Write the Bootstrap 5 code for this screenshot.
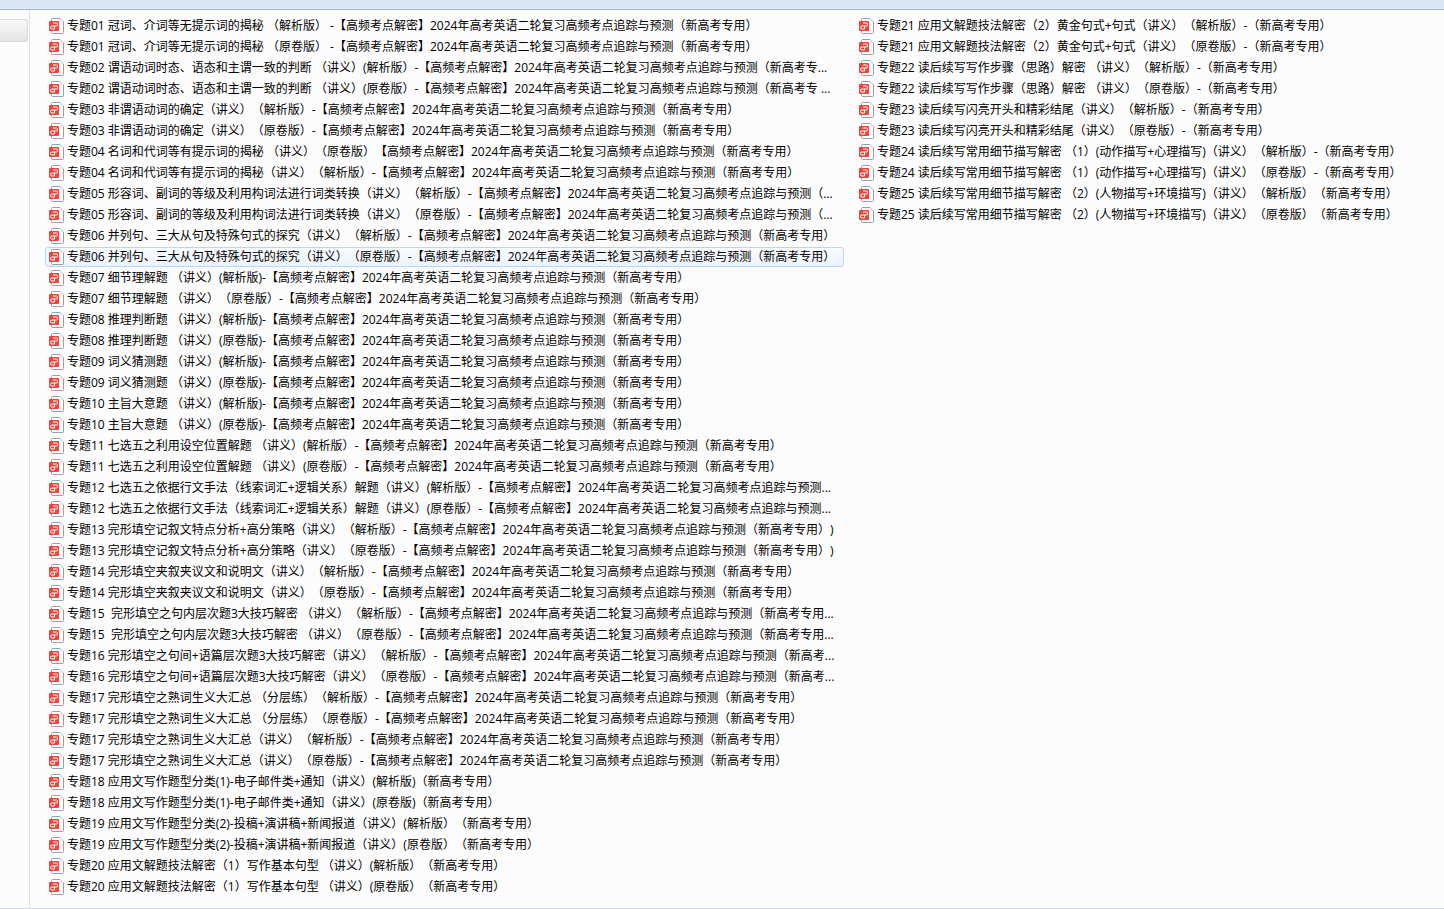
<!DOCTYPE html>
<html lang="zh-CN">
<head>
<meta charset="utf-8">
<meta name="viewport" content="width=device-width, initial-scale=1">
<title>高考英语二轮复习讲义</title>
<link rel="stylesheet" href="https://cdn.jsdelivr.net/npm/bootstrap@5.3.0/dist/css/bootstrap.min.css">
<script src="https://cdn.jsdelivr.net/npm/bootstrap@5.3.0/dist/js/bootstrap.bundle.min.js"></script>
<style>
  body { background: #fcfcfc; color: #000; font: 12px/20px "Open Sans", "Noto Sans CJK SC", sans-serif; text-spacing-trim: space-all; }
  .toolbar-strip { height: 10px; background: linear-gradient(#dbe6f4 8px, #e4edf8 8px); border-bottom: 1px solid #a0afc8; }
  .nav-pane { width: 30px; padding-top: 9px; border-right: 1px solid #d6e2ef; }
  .nav-item-current { width: 28px; height: 23px; border: 1px solid #d9d9d9; border-left: 0; border-radius: 0 3px 3px 0; background: linear-gradient(#f8f8f8, #e5e5e5); }
  .file-grid { display: grid; grid-auto-flow: column; grid-template-rows: repeat(42, 20px); grid-template-columns: minmax(0, 799fr) minmax(0, 589fr); gap: 1px 11px; padding: 6px 0 11px 15px; }
  .file-link { height: 20px; padding: 0 3px; gap: 2px; border: 1px solid transparent; border-radius: 3px; color: #000; line-height: 18px; white-space: pre; text-decoration: none; }
  .file-link svg { width: 16px; height: 16px; flex: none; }
  .file-link:hover, .file-link.hot { border-color: #b8d6fb; background: linear-gradient(#fafbfd, #ebf3fd); }
  .pane-row { border-bottom: 1px solid #ccd6e3; }
</style>
</head>
<body class="d-flex flex-column min-vh-100">
<svg class="d-none" aria-hidden="true">
  <symbol id="pdf" viewBox="0 0 16 16">
    <path d="M3.5 .5H11L14.5 4V14.5Q14.5 15.5 13.5 15.5H3.5Q2.5 15.5 2.5 14.5V1.5Q2.500 .5 3.500 .5Z" fill="#fff" stroke="#969fb0"/>
    <path d="M11 .5 14.500 4H12Q11 4 11 3Z" fill="#e8ebf0"/>
    <rect y="3" width="10" height="10" rx="1" fill="#f0443a"/>
    <path d="M4 5H7.500Q8.500 5 8.500 6V7Q8.500 8 7.500 8H3Q1.500 8 1.500 9.500T3 11H5.500V8" fill="none" stroke="#fff"/>
  </symbol>
</svg>
<header class="toolbar-strip"></header>
<div class="pane-row d-flex flex-grow-1">
<aside class="nav-pane flex-shrink-0"><div class="nav-item-current"></div></aside>
<main class="flex-grow-1">
<ul class="file-grid list-unstyled mb-0">
<li><a href="#" class="file-link d-flex align-items-center"><svg><use href="#pdf"/></svg><span>专题01 冠词、介词等无提示词的揭秘 （解析版） -【高频考点解密】2024年高考英语二轮复习高频考点追踪与预测（新高考专用）</span></a></li>
<li><a href="#" class="file-link d-flex align-items-center"><svg><use href="#pdf"/></svg><span>专题01 冠词、介词等无提示词的揭秘 （原卷版） -【高频考点解密】2024年高考英语二轮复习高频考点追踪与预测（新高考专用）</span></a></li>
<li><a href="#" class="file-link d-flex align-items-center"><svg><use href="#pdf"/></svg><span>专题02 谓语动词时态、语态和主谓一致的判断 （讲义）(解析版）-【高频考点解密】2024年高考英语二轮复习高频考点追踪与预测（新高考专...</span></a></li>
<li><a href="#" class="file-link d-flex align-items-center"><svg><use href="#pdf"/></svg><span>专题02 谓语动词时态、语态和主谓一致的判断 （讲义）(原卷版）-【高频考点解密】2024年高考英语二轮复习高频考点追踪与预测（新高考专 ...</span></a></li>
<li><a href="#" class="file-link d-flex align-items-center"><svg><use href="#pdf"/></svg><span>专题03 非谓语动词的确定（讲义）（解析版）-【高频考点解密】2024年高考英语二轮复习高频考点追踪与预测（新高考专用）</span></a></li>
<li><a href="#" class="file-link d-flex align-items-center"><svg><use href="#pdf"/></svg><span>专题03 非谓语动词的确定（讲义）（原卷版）-【高频考点解密】2024年高考英语二轮复习高频考点追踪与预测（新高考专用）</span></a></li>
<li><a href="#" class="file-link d-flex align-items-center"><svg><use href="#pdf"/></svg><span>专题04 名词和代词等有提示词的揭秘 （讲义）（原卷版）【高频考点解密】2024年高考英语二轮复习高频考点追踪与预测（新高考专用）</span></a></li>
<li><a href="#" class="file-link d-flex align-items-center"><svg><use href="#pdf"/></svg><span>专题04 名词和代词等有提示词的揭秘（讲义）（解析版）-【高频考点解密】2024年高考英语二轮复习高频考点追踪与预测（新高考专用）</span></a></li>
<li><a href="#" class="file-link d-flex align-items-center"><svg><use href="#pdf"/></svg><span>专题05 形容词、副词的等级及利用构词法进行词类转换（讲义）（解析版）-【高频考点解密】2024年高考英语二轮复习高频考点追踪与预测（...</span></a></li>
<li><a href="#" class="file-link d-flex align-items-center"><svg><use href="#pdf"/></svg><span>专题05 形容词、副词的等级及利用构词法进行词类转换（讲义）（原卷版）-【高频考点解密】2024年高考英语二轮复习高频考点追踪与预测（...</span></a></li>
<li><a href="#" class="file-link d-flex align-items-center"><svg><use href="#pdf"/></svg><span>专题06 并列句、三大从句及特殊句式的探究（讲义）（解析版）-【高频考点解密】2024年高考英语二轮复习高频考点追踪与预测（新高考专用）</span></a></li>
<li><a href="#" class="file-link hot d-flex align-items-center"><svg><use href="#pdf"/></svg><span>专题06 并列句、三大从句及特殊句式的探究（讲义）（原卷版）-【高频考点解密】2024年高考英语二轮复习高频考点追踪与预测（新高考专用）</span></a></li>
<li><a href="#" class="file-link d-flex align-items-center"><svg><use href="#pdf"/></svg><span>专题07 细节理解题 （讲义）(解析版)-【高频考点解密】2024年高考英语二轮复习高频考点追踪与预测（新高考专用）</span></a></li>
<li><a href="#" class="file-link d-flex align-items-center"><svg><use href="#pdf"/></svg><span>专题07 细节理解题 （讲义）（原卷版）-【高频考点解密】2024年高考英语二轮复习高频考点追踪与预测（新高考专用）</span></a></li>
<li><a href="#" class="file-link d-flex align-items-center"><svg><use href="#pdf"/></svg><span>专题08 推理判断题 （讲义）(解析版)-【高频考点解密】2024年高考英语二轮复习高频考点追踪与预测（新高考专用）</span></a></li>
<li><a href="#" class="file-link d-flex align-items-center"><svg><use href="#pdf"/></svg><span>专题08 推理判断题 （讲义）(原卷版)-【高频考点解密】2024年高考英语二轮复习高频考点追踪与预测（新高考专用）</span></a></li>
<li><a href="#" class="file-link d-flex align-items-center"><svg><use href="#pdf"/></svg><span>专题09 词义猜测题 （讲义）(解析版)-【高频考点解密】2024年高考英语二轮复习高频考点追踪与预测（新高考专用）</span></a></li>
<li><a href="#" class="file-link d-flex align-items-center"><svg><use href="#pdf"/></svg><span>专题09 词义猜测题 （讲义）(原卷版)-【高频考点解密】2024年高考英语二轮复习高频考点追踪与预测（新高考专用）</span></a></li>
<li><a href="#" class="file-link d-flex align-items-center"><svg><use href="#pdf"/></svg><span>专题10 主旨大意题 （讲义）(解析版)-【高频考点解密】2024年高考英语二轮复习高频考点追踪与预测（新高考专用）</span></a></li>
<li><a href="#" class="file-link d-flex align-items-center"><svg><use href="#pdf"/></svg><span>专题10 主旨大意题 （讲义）(原卷版)-【高频考点解密】2024年高考英语二轮复习高频考点追踪与预测（新高考专用）</span></a></li>
<li><a href="#" class="file-link d-flex align-items-center"><svg><use href="#pdf"/></svg><span>专题11 七选五之利用设空位置解题 （讲义）(解析版）-【高频考点解密】2024年高考英语二轮复习高频考点追踪与预测（新高考专用）</span></a></li>
<li><a href="#" class="file-link d-flex align-items-center"><svg><use href="#pdf"/></svg><span>专题11 七选五之利用设空位置解题 （讲义）(原卷版）-【高频考点解密】2024年高考英语二轮复习高频考点追踪与预测（新高考专用）</span></a></li>
<li><a href="#" class="file-link d-flex align-items-center"><svg><use href="#pdf"/></svg><span>专题12 七选五之依据行文手法（线索词汇+逻辑关系）解题（讲义）(解析版）-【高频考点解密】2024年高考英语二轮复习高频考点追踪与预测...</span></a></li>
<li><a href="#" class="file-link d-flex align-items-center"><svg><use href="#pdf"/></svg><span>专题12 七选五之依据行文手法（线索词汇+逻辑关系）解题（讲义）(原卷版）-【高频考点解密】2024年高考英语二轮复习高频考点追踪与预测...</span></a></li>
<li><a href="#" class="file-link d-flex align-items-center"><svg><use href="#pdf"/></svg><span>专题13 完形填空记叙文特点分析+高分策略（讲义）（解析版）-【高频考点解密】2024年高考英语二轮复习高频考点追踪与预测（新高考专用）)</span></a></li>
<li><a href="#" class="file-link d-flex align-items-center"><svg><use href="#pdf"/></svg><span>专题13 完形填空记叙文特点分析+高分策略（讲义）（原卷版）-【高频考点解密】2024年高考英语二轮复习高频考点追踪与预测（新高考专用）)</span></a></li>
<li><a href="#" class="file-link d-flex align-items-center"><svg><use href="#pdf"/></svg><span>专题14 完形填空夹叙夹议文和说明文（讲义）（解析版）-【高频考点解密】2024年高考英语二轮复习高频考点追踪与预测（新高考专用）</span></a></li>
<li><a href="#" class="file-link d-flex align-items-center"><svg><use href="#pdf"/></svg><span>专题14 完形填空夹叙夹议文和说明文（讲义）（原卷版）-【高频考点解密】2024年高考英语二轮复习高频考点追踪与预测（新高考专用）</span></a></li>
<li><a href="#" class="file-link d-flex align-items-center"><svg><use href="#pdf"/></svg><span>专题15  完形填空之句内层次题3大技巧解密 （讲义）（解析版）-【高频考点解密】2024年高考英语二轮复习高频考点追踪与预测（新高考专用...</span></a></li>
<li><a href="#" class="file-link d-flex align-items-center"><svg><use href="#pdf"/></svg><span>专题15  完形填空之句内层次题3大技巧解密 （讲义）（原卷版）-【高频考点解密】2024年高考英语二轮复习高频考点追踪与预测（新高考专用...</span></a></li>
<li><a href="#" class="file-link d-flex align-items-center"><svg><use href="#pdf"/></svg><span>专题16 完形填空之句间+语篇层次题3大技巧解密（讲义）（解析版）-【高频考点解密】2024年高考英语二轮复习高频考点追踪与预测（新高考...</span></a></li>
<li><a href="#" class="file-link d-flex align-items-center"><svg><use href="#pdf"/></svg><span>专题16 完形填空之句间+语篇层次题3大技巧解密（讲义）（原卷版）-【高频考点解密】2024年高考英语二轮复习高频考点追踪与预测（新高考...</span></a></li>
<li><a href="#" class="file-link d-flex align-items-center"><svg><use href="#pdf"/></svg><span>专题17 完形填空之熟词生义大汇总 （分层练）（解析版）-【高频考点解密】2024年高考英语二轮复习高频考点追踪与预测（新高考专用）</span></a></li>
<li><a href="#" class="file-link d-flex align-items-center"><svg><use href="#pdf"/></svg><span>专题17 完形填空之熟词生义大汇总 （分层练）（原卷版）-【高频考点解密】2024年高考英语二轮复习高频考点追踪与预测（新高考专用）</span></a></li>
<li><a href="#" class="file-link d-flex align-items-center"><svg><use href="#pdf"/></svg><span>专题17 完形填空之熟词生义大汇总（讲义）（解析版）-【高频考点解密】2024年高考英语二轮复习高频考点追踪与预测（新高考专用）</span></a></li>
<li><a href="#" class="file-link d-flex align-items-center"><svg><use href="#pdf"/></svg><span>专题17 完形填空之熟词生义大汇总（讲义）（原卷版）-【高频考点解密】2024年高考英语二轮复习高频考点追踪与预测（新高考专用）</span></a></li>
<li><a href="#" class="file-link d-flex align-items-center"><svg><use href="#pdf"/></svg><span>专题18 应用文写作题型分类(1)-电子邮件类+通知（讲义）(解析版)（新高考专用）</span></a></li>
<li><a href="#" class="file-link d-flex align-items-center"><svg><use href="#pdf"/></svg><span>专题18 应用文写作题型分类(1)-电子邮件类+通知（讲义）(原卷版)（新高考专用）</span></a></li>
<li><a href="#" class="file-link d-flex align-items-center"><svg><use href="#pdf"/></svg><span>专题19 应用文写作题型分类(2)-投稿+演讲稿+新闻报道（讲义）(解析版）（新高考专用）</span></a></li>
<li><a href="#" class="file-link d-flex align-items-center"><svg><use href="#pdf"/></svg><span>专题19 应用文写作题型分类(2)-投稿+演讲稿+新闻报道（讲义）(原卷版）（新高考专用）</span></a></li>
<li><a href="#" class="file-link d-flex align-items-center"><svg><use href="#pdf"/></svg><span>专题20 应用文解题技法解密（1）写作基本句型 （讲义）(解析版）（新高考专用）</span></a></li>
<li><a href="#" class="file-link d-flex align-items-center"><svg><use href="#pdf"/></svg><span>专题20 应用文解题技法解密（1）写作基本句型 （讲义）(原卷版）（新高考专用）</span></a></li>
<li><a href="#" class="file-link d-flex align-items-center"><svg><use href="#pdf"/></svg><span>专题21 应用文解题技法解密（2）黄金句式+句式（讲义）（解析版）-（新高考专用）</span></a></li>
<li><a href="#" class="file-link d-flex align-items-center"><svg><use href="#pdf"/></svg><span>专题21 应用文解题技法解密（2）黄金句式+句式（讲义）（原卷版）-（新高考专用）</span></a></li>
<li><a href="#" class="file-link d-flex align-items-center"><svg><use href="#pdf"/></svg><span>专题22 读后续写写作步骤（思路）解密 （讲义）（解析版）-（新高考专用）</span></a></li>
<li><a href="#" class="file-link d-flex align-items-center"><svg><use href="#pdf"/></svg><span>专题22 读后续写写作步骤（思路）解密 （讲义）（原卷版）-（新高考专用）</span></a></li>
<li><a href="#" class="file-link d-flex align-items-center"><svg><use href="#pdf"/></svg><span>专题23 读后续写闪亮开头和精彩结尾（讲义）（解析版）-（新高考专用）</span></a></li>
<li><a href="#" class="file-link d-flex align-items-center"><svg><use href="#pdf"/></svg><span>专题23 读后续写闪亮开头和精彩结尾（讲义）（原卷版）-（新高考专用）</span></a></li>
<li><a href="#" class="file-link d-flex align-items-center"><svg><use href="#pdf"/></svg><span>专题24 读后续写常用细节描写解密 （1）(动作描写+心理描写)（讲义）（解析版）-（新高考专用）</span></a></li>
<li><a href="#" class="file-link d-flex align-items-center"><svg><use href="#pdf"/></svg><span>专题24 读后续写常用细节描写解密 （1）(动作描写+心理描写)（讲义）（原卷版）-（新高考专用）</span></a></li>
<li><a href="#" class="file-link d-flex align-items-center"><svg><use href="#pdf"/></svg><span>专题25 读后续写常用细节描写解密 （2）(人物描写+环境描写)（讲义）（解析版）（新高考专用）</span></a></li>
<li><a href="#" class="file-link d-flex align-items-center"><svg><use href="#pdf"/></svg><span>专题25 读后续写常用细节描写解密 （2）(人物描写+环境描写)（讲义）（原卷版）（新高考专用）</span></a></li>
</ul>
</main>
</div>
</body>
</html>
